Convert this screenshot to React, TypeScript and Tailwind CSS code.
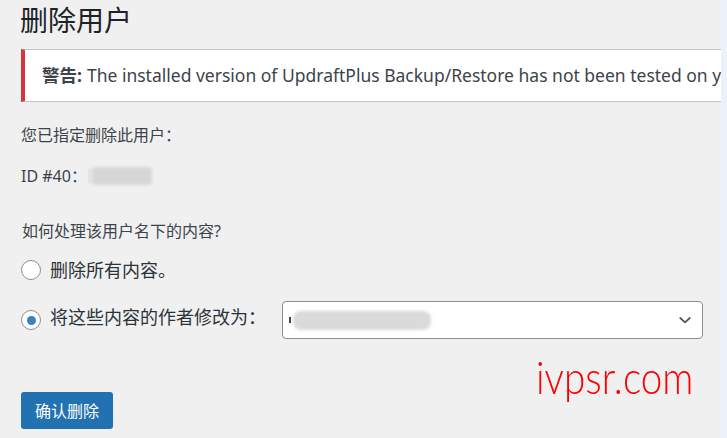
import React from 'react';

const cjk = { fontFamily: '"Noto Sans", "Noto Sans CJK SC", sans-serif' };

function Radio({ checked }: { checked?: boolean }) {
  return (
    <span className="flex h-[20px] w-[20px] shrink-0 items-center justify-center rounded-full border border-[#8c8f94] bg-white">
      {checked && <span className="h-[9px] w-[9px] rounded-full bg-[#3582c4]" />}
    </span>
  );
}

export default function App() {
  return (
    <div className="relative flex h-[438px] w-[727px] overflow-hidden bg-[#f0f0f1]" style={cjk}>
      <div className="flex-1 overflow-hidden pl-[20px]">
        <h1 className="pt-[6px] text-[28px] leading-[28px] text-[#1d2327]">删除用户</h1>

        {/* plugin warning */}
        <div className="mt-[15px] ml-[1px] flex h-[53px] w-[900px] items-center whitespace-nowrap border-y border-r border-[#c3c4c7] border-l-4 border-l-[#d63638] bg-white pl-[17px] text-[17.5px] text-[#3c434a]">
          <strong className="font-bold">警告:</strong>
          <span className="ml-[5px]">The installed version of UpdraftPlus Backup/Restore has not been tested on your version of WordPress</span>
        </div>

        <p className="mt-[23px] ml-[1px] text-[16px] leading-[20px] text-[#3c434a]">您已指定删除此用户：</p>
        <div className="mt-[21px] ml-[1px] flex items-center text-[16px] leading-[20px] text-[#3c434a]">
          <span>ID #40：</span>
          <span className="ml-[1px] h-[16px] w-[4px] rounded-full bg-[#e6e6e6]" />
          <span className="h-[18px] w-[60px] rounded-[4px] bg-[#d6d6d8] blur-[1.5px]" />
        </div>

        <p className="mt-[35px] ml-[2px] text-[16px] leading-[20px] text-[#3c434a]">如何处理该用户名下的内容?</p>

        <div className="mt-[17px] ml-[1px] flex h-[24px] items-center gap-[9px] text-[18px] text-[#2c3338]">
          <Radio />
          <span>删除所有内容。</span>
        </div>

        <div className="mt-[19px] ml-[1px] flex items-center text-[18px] text-[#2c3338]">
          <Radio checked />
          <span className="ml-[9px] -mt-[6px] w-[214px] whitespace-nowrap">将这些内容的作者修改为：</span>
          <div className="ml-[18px] flex h-[38px] w-[421px] items-center justify-between rounded-[4px] border border-[#8c8f94] bg-white pl-[6px] pr-[9px]">
            <div className="flex items-center">
              <span className="h-[6px] w-[2px] bg-[#3c434a]" />
              <span className="ml-[2px] h-[19px] w-[138px] rounded-[8px] bg-[#dadadc] blur-[1.5px]" />
            </div>
            <svg width="16" height="16" viewBox="0 0 20 20" fill="none" stroke="#50575e" strokeWidth="2.2" strokeLinecap="round" strokeLinejoin="round">
              <path d="M4 7.5l6 5.5 6-5.5" />
            </svg>
          </div>
        </div>

        <button className="mt-[53px] ml-[1px] flex h-[37px] w-[92px] items-center justify-center rounded-[3px] bg-[#2271b1] text-[16px] text-white">
          确认删除
        </button>
      </div>
      <div className="w-[6px] shrink-0 bg-[#edf1f9]" />

      {/* watermark */}
      <span
        className="absolute left-[536px] top-[354px] origin-left scale-x-[0.84] text-[46px] font-light leading-none text-[#ff0000]"
        style={{ fontFamily: 'Lato, "Liberation Sans", sans-serif' }}
      >
        ivpsr.com
      </span>
    </div>
  );
}
